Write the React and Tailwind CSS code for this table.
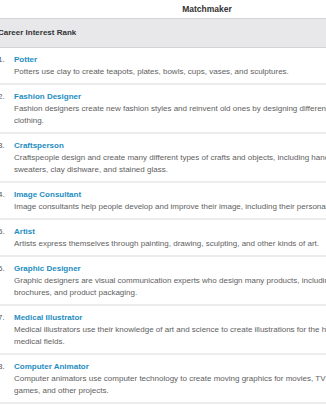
const careers = [
  {
    title: 'Potter',
    lines: ['Potters use clay to create teapots, plates, bowls, cups, vases, and sculptures.'],
  },
  {
    title: 'Fashion Designer',
    lines: [
      'Fashion designers create new fashion styles and reinvent old ones by designing different types of',
      'clothing.',
    ],
  },
  {
    title: 'Craftsperson',
    lines: [
      'Craftspeople design and create many different types of crafts and objects, including handmade jewelry,',
      'sweaters, clay dishware, and stained glass.',
    ],
  },
  {
    title: 'Image Consultant',
    lines: ['Image consultants help people develop and improve their image, including their personal style.'],
  },
  {
    title: 'Artist',
    lines: ['Artists express themselves through painting, drawing, sculpting, and other kinds of art.'],
  },
  {
    title: 'Graphic Designer',
    lines: [
      'Graphic designers are visual communication experts who design many products, including logos,',
      'brochures, and product packaging.',
    ],
  },
  {
    title: 'Medical Illustrator',
    lines: [
      'Medical illustrators use their knowledge of art and science to create illustrations for the health and',
      'medical fields.',
    ],
  },
  {
    title: 'Computer Animator',
    lines: [
      'Computer animators use computer technology to create moving graphics for movies, TV shows, video',
      'games, and other projects.',
    ],
  },
  {
    title: 'Art Director',
    lines: ['Art directors manage the visual style and images in magazines, newspapers, and product packaging.'],
  },
];

export default function App() {
  return (
    <div className="w-[326px] h-[413px] overflow-hidden bg-white font-['Liberation_Sans',Arial,sans-serif]">
      <div className="ml-[-16px] w-[446px]">
        {/* Title */}
        <div className="h-[18px] flex items-center justify-center text-[8.5px] font-bold text-[#333]">
          Matchmaker
        </div>

        {/* Section header */}
        <div className="h-[30px] flex items-center pl-[14px] bg-[#e8e8ea] border-y border-[#d4d4d6] text-[8px] font-bold text-[#333]">
          Career Interest Rank
        </div>

        {/* Ranked list */}
        <ol>
          {careers.map((c, i) => (
            <li key={c.title} className="flex pt-[6px] pb-[5px] border-b-2 border-[#ececec] leading-[12px]">
              <span className="w-[30px] shrink-0 pl-[14px] text-[8px] text-[#555]">{i + 1}.</span>
              <div className="flex flex-col">
                <span className="text-[8px] font-bold text-[#1e8dc1]">{c.title}</span>
                {c.lines.map((l) => (
                  <span key={l} className="text-[8px] text-[#616161] whitespace-nowrap">
                    {l}
                  </span>
                ))}
              </div>
            </li>
          ))}
        </ol>
      </div>
    </div>
  );
}
